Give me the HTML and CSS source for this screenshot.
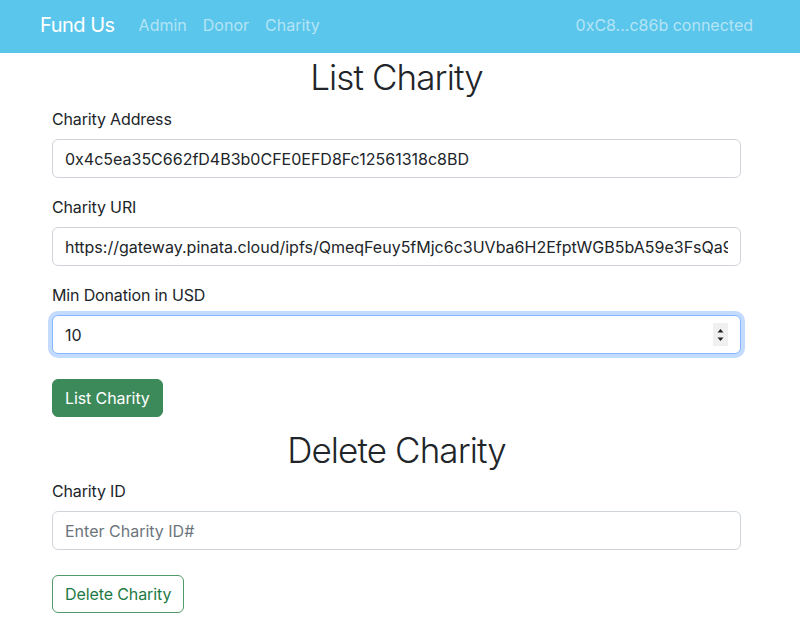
FILE: index.html
```html
<!DOCTYPE html>
<html lang="en">
<head>
<meta charset="utf-8">
<title>Fund Us</title>
<link rel="stylesheet" href="styles.css">
</head>
<body>
<nav class="navbar">
  <div class="nav-left">
    <span class="brand">Fund Us</span>
    <a class="nav-link" href="#">Admin</a>
    <a class="nav-link" href="#">Donor</a>
    <a class="nav-link" href="#">Charity</a>
  </div>
  <span class="nav-link account">0xC8...c86b connected</span>
</nav>
<main class="container">
  <h1 class="title">List Charity</h1>
  <div class="group">
    <label class="form-label">Charity Address</label>
    <input class="form-control" type="text" value="0x4c5ea35C662fD4B3b0CFE0EFD8Fc12561318c8BD">
  </div>
  <div class="group">
    <label class="form-label">Charity URI</label>
    <input class="form-control" type="text" value="https://gateway.pinata.cloud/ipfs/QmeqFeuy5fMjc6c3UVba6H2EfptWGB5bA59e3FsQa9qTz">
  </div>
  <div class="group">
    <label class="form-label">Min Donation in USD</label>
    <div class="number-wrap">
      <input class="form-control focused" type="text" value="10">
      <span class="spinner">
        <svg width="11" height="22" viewBox="0 0 11 22"><path d="M2.5 8.5 L5.5 5 L8.5 8.5 Z" fill="#222"/><path d="M2.5 13.5 L5.5 17 L8.5 13.5 Z" fill="#222"/></svg>
      </span>
    </div>
  </div>
  <button class="btn btn-success" type="button">List Charity</button>
  <h2 class="title">Delete Charity</h2>
  <div class="group">
    <label class="form-label">Charity ID</label>
    <input class="form-control" type="text" placeholder="Enter Charity ID#">
  </div>
  <button class="btn btn-outline-success" type="button">Delete Charity</button>
</main>
</body>
</html>
```
FILE: styles.css
```css
* { box-sizing: border-box; }
body {
  margin: 0;
  font-family: "Inter", "Liberation Sans", sans-serif;
  font-size: 16px;
  line-height: 24px;
  color: #212529;
  background: #fff;
}
.navbar {
  height: 53px;
  background: #5bc6eb;
  display: flex;
  align-items: center;
  justify-content: space-between;
  padding: 0 47px 3px 40px;
}
.nav-left {
  display: flex;
  align-items: center;
}
.brand {
  color: #fff;
  font-size: 20px;
  line-height: 30px;
  letter-spacing: -0.5px;
  margin-right: 24px;
}
.nav-link {
  color: rgba(255,255,255,0.55);
  text-decoration: none;
  font-size: 16px;
  margin-right: 16px;
}
.account { margin-right: 0; }
.container {
  width: 741px;
  padding-left: 52px;
  display: flex;
  flex-direction: column;
  align-items: flex-start;
}
.title {
  align-self: stretch;
  text-align: center;
  font-size: 35px;
  line-height: 44px;
  font-weight: 300;
  letter-spacing: -0.9px;
  margin: 2px 0 8px;
}
h2.title { margin: 11px 0 7px; }
.group {
  align-self: stretch;
  margin-bottom: 17px;
}
.form-label {
  display: block;
  margin-bottom: 8px;
  letter-spacing: -0.15px;
}
.form-control {
  display: block;
  width: 100%;
  height: 39px;
  padding: 6px 12px;
  font: inherit;
  color: #212529;
  background: #fff;
  border: 1px solid #ced4da;
  border-radius: 6px;
  outline: none;
}
.form-control::placeholder { color: #6c757d; }
.form-control.focused {
  border-color: #86b7fe;
  box-shadow: 0 0 0 4px rgba(13,110,253,0.25);
}
.number-wrap { position: relative; }
.spinner {
  position: absolute;
  right: 13px;
  top: 8px;
  width: 15px;
  height: 23px;
  background: #f0f0f0;
  display: flex;
  align-items: center;
  justify-content: center;
}
.btn {
  font: inherit;
  height: 38px;
  padding: 6px 12px;
  border-radius: 6px;
  margin-top: 8px;
  letter-spacing: -0.1px;
  cursor: pointer;
}
.btn-success {
  color: #fff;
  background: #3c8a5a;
  border: 1px solid #3c8a5a;
}
.btn-outline-success {
  color: #1e7a44;
  background: #fff;
  border: 1px solid #4f9a68;
}
```
